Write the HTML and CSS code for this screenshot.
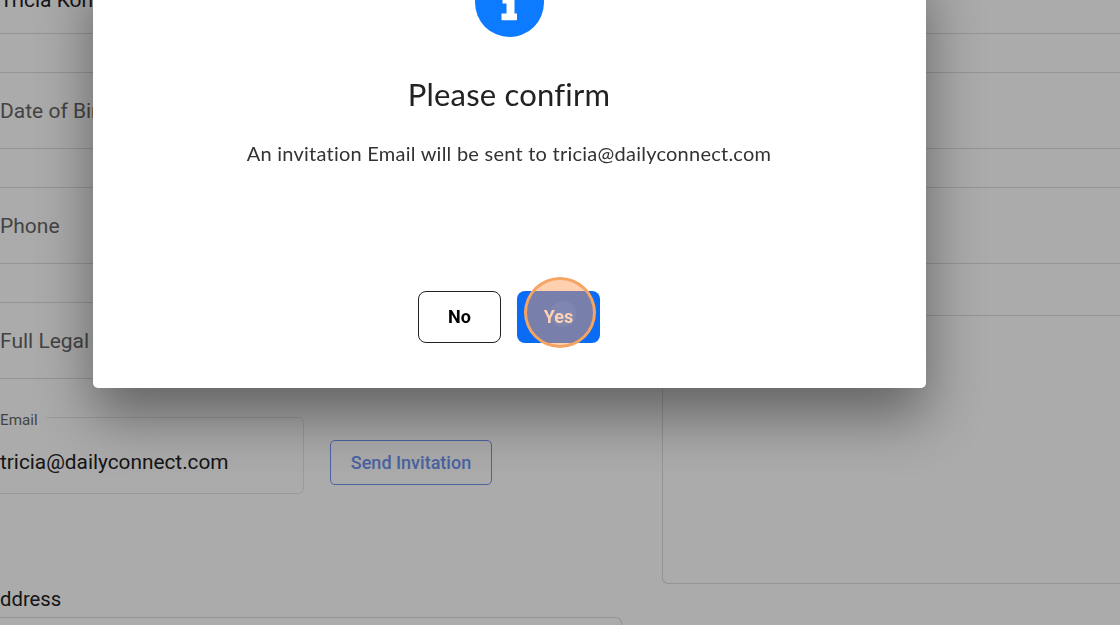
FILE: index.html
```html
<!DOCTYPE html>
<html lang="en">
  <head>
    <meta charset="UTF-8" />
    <meta name="viewport" content="width=device-width, initial-scale=1.0" />
    <title>Please confirm</title>
    <link rel="stylesheet" href="styles.css">
  </head>
  <body>
    <!-- Profile form behind the dialog -->
    <div class="page">
      <div class="col-left">
        <div class="field"><span class="value">Tricia Kon</span></div>
        <div class="field"><span class="label">Date of Birth</span></div>
        <div class="field"><span class="label">Phone</span></div>
        <div class="field"><span class="label">Full Legal Name</span></div>

        <div class="email-row">
          <div class="email-box">
            <span class="email-label">Email</span>
            <span class="email-value">tricia@dailyconnect.com</span>
          </div>
          <button class="invite-btn">Send Invitation</button>
        </div>

        <div class="address-label">ddress</div>
        <div class="address-box"></div>
      </div>

      <div class="col-right">
        <div class="field"></div>
        <div class="field"></div>
        <div class="field field-short"></div>
        <div class="notes-box"></div>
      </div>
    </div>

    <div class="overlay"></div>

    <!-- Confirm dialog -->
    <div class="modal">
      <svg class="modal-icon" viewBox="0 0 69 69" width="69" height="69">
        <circle cx="34.500" cy="34.500" r="34.500" fill="#0d7bff" />
        <path
          d="M27.500 20H39.500V45.500H42V51.500q0 .7-.7 .7H27.200q-.7 0-.7-.7V45.500H31.500V35.500H27.500z"
          fill="#fff"
        />
      </svg>
      <h2 class="modal-title">Please confirm</h2>
      <p class="modal-text">An invitation Email will be sent to tricia@dailyconnect.com</p>
      <div class="modal-actions">
        <button class="btn btn-no">No</button>
        <button class="btn btn-yes">Yes</button>
      </div>
    </div>

    <!-- Click marker -->
    <div class="click-ring"><div class="click-dot"></div></div>
  </body>
</html>
```

FILE: styles.css
```css
html,
body {
  overflow: hidden;
}

body {
  margin: 0;
  height: 625px;
  background: #fff;
  font-family: Roboto, sans-serif;
}

/* Background form */
.page {
  display: flex;
  gap: 40px;
  height: 668px;
  margin-top: -43px;
}

.col-left {
  width: 622px;
  flex-shrink: 0;
}

.col-right {
  flex: 1;
}

.field {
  box-sizing: border-box;
  height: 77px;
  margin-bottom: 38px;
  border-bottom: 1px solid #ddd;
  border-top: 1px solid #ddd;
  display: flex;
  align-items: center;
  font-size: 21px;
}

.col-left .field:first-child,
.col-right .field:first-child {
  border-top: none;
  align-items: flex-end;
  padding-bottom: 21px;
}

.value {
  color: #222;
}

.label {
  color: #666;
}

.field-short {
  margin-bottom: 51px;
}

.email-row {
  display: flex;
  align-items: flex-start;
  gap: 26px;
}

.email-box {
  box-sizing: border-box;
  width: 304px;
  height: 77px;
  padding-top: 13px;
  position: relative;
  border: 1px solid #e6e6e6;
  border-left: none;
  border-radius: 0 6px 6px 0;
  display: flex;
  align-items: center;
  font-size: 20.800px;
  color: #222;
}

.email-label {
  position: absolute;
  left: 0;
  top: -7px;
  padding-right: 8px;
  background: #fff;
  font-size: 15.200px;
  color: #666;
}

.invite-btn {
  box-sizing: border-box;
  width: 162px;
  height: 45px;
  margin-top: 23px;
  padding: 0;
  background: #fff;
  border: 1px solid #7396f0;
  border-radius: 5px;
  font: 500 18px Roboto, sans-serif;
  color: #6f93f0;
}

.address-label {
  margin-top: 93px;
  font-size: 20.300px;
  line-height: 24px;
  color: #222;
}

.address-box {
  height: 7px;
  margin-top: 6px;
  border-top: 1px solid #ddd;
  border-right: 1px solid #ddd;
  border-radius: 0 6px 0 0;
}

.notes-box {
  box-sizing: border-box;
  height: 269px;
  border: 1px solid #ddd;
  border-right: none;
  border-radius: 6px 0 0 6px;
}

.overlay {
  position: fixed;
  inset: 0;
  background: rgba(0, 0, 0, 0.33);
}

/* Dialog */
.modal {
  position: absolute;
  left: 92.500px;
  top: -40px;
  width: 833px;
  height: 428px;
  padding-top: 8px;
  box-sizing: border-box;
  display: flex;
  flex-direction: column;
  align-items: center;
  background: #fff;
  border-radius: 5px;
  box-shadow: 0 28px 56px rgba(0, 0, 0, 0.42);
  font-family: Lato, sans-serif;
}

.modal-icon {
  display: block;
  flex-shrink: 0;
}

.modal-title {
  margin: 37.500px 0 0;
  font-size: 31px;
  line-height: 38px;
  font-weight: 400;
  letter-spacing: 0.2px;
  color: #222;
}

.modal-text {
  margin: 27px 0 0;
  font-size: 20px;
  line-height: 26px;
  letter-spacing: 0.24px;
  color: #333;
}

.modal-actions {
  display: flex;
  gap: 16px;
  margin-top: 125px;
}

.btn {
  box-sizing: border-box;
  width: 83px;
  height: 52px;
  padding: 0;
  border-radius: 8px;
  font: 700 18px Roboto, sans-serif;
}

.btn-no {
  background: #fff;
  border: 1px solid #222;
  color: #000;
}

.btn-yes {
  background: #0a6cf5;
  border: none;
  color: #fff;
}

/* Click marker */
.click-ring {
  position: absolute;
  left: 524px;
  top: 277px;
  width: 72px;
  height: 71px;
  box-sizing: border-box;
  display: flex;
  align-items: center;
  justify-content: center;
  border: 3px solid #f5a462;
  border-radius: 50%;
  background: rgba(255, 150, 80, 0.45);
}

.click-dot {
  width: 26px;
  height: 26px;
  margin: 2px 0 0 5px;
  border-radius: 50%;
  background: rgba(255, 255, 255, 0.06);
}
```
